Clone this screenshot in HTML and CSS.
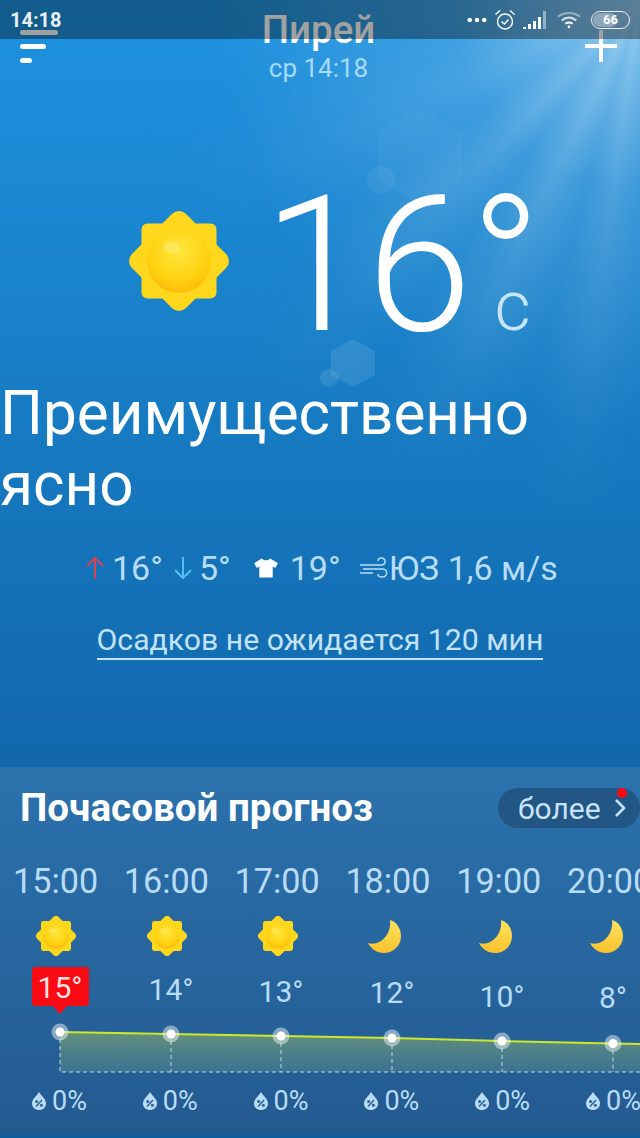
FILE: index.html
```html
<!DOCTYPE html>
<html lang="ru">
<head>
    <meta charset="UTF-8">
    <meta name="viewport" content="width=device-width, initial-scale=1.0">
    <title>Пирей</title>
    <link rel="stylesheet" href="styles.css">
</head>
<body>

    <svg class="defs" width="0" height="0">
        <defs>
            <radialGradient id="sunCore" cx="0.5" cy="0.35" r="0.7">
                <stop offset="0" stop-color="#ffe640"/>
                <stop offset="0.65" stop-color="#ffd20f"/>
                <stop offset="1" stop-color="#fbb50a"/>
            </radialGradient>
            <linearGradient id="moonFill" x1="0" y1="0" x2="0" y2="1">
                <stop offset="0" stop-color="#ffe45e"/>
                <stop offset="1" stop-color="#fbc12c"/>
            </linearGradient>
            <linearGradient id="chartFill" x1="0" y1="0" x2="0" y2="1">
                <stop offset="0" stop-color="#a5c05a" stop-opacity="0.5"/>
                <stop offset="1" stop-color="#6fa58e" stop-opacity="0.3"/>
            </linearGradient>
            <symbol id="sun" viewBox="0 0 100 100">
                <rect x="12.5" y="12.5" width="75" height="75" rx="6" fill="#ffd81e"/>
                <rect x="11.75" y="11.75" width="76.500" height="76.500" rx="10" fill="#ffd81e" transform="rotate(45 50 50)"/>
                <circle cx="50" cy="50" r="32" fill="url(#sunCore)"/>
                <ellipse cx="42" cy="36" rx="8" ry="6" fill="#fff3a0" opacity="0.35"/>
            </symbol>
            <symbol id="moon" viewBox="0 0 33 33">
                <path d="M22 0C29 2 33 9 33 16 33 26 25 33 16 33 9 33 3 29 0 23 12 27 24 14 22 0Z" fill="url(#moonFill)"/>
            </symbol>
            <symbol id="drop" viewBox="0 0 14 18">
                <path d="M7 0C9 3.500 14 7 14 11.500 14 15.400 10.900 18 7 18 3.100 18 0 15.400 0 11.500 0 7 5 3.500 7 0Z" fill="#b9dcf5"/>
                <path d="M4 14.500L10 8" stroke="#2a6399" stroke-width="1.500"/>
                <circle cx="4.600" cy="9.600" r="1.500" fill="#2a6399"/>
                <circle cx="9.400" cy="13.200" r="1.500" fill="#2a6399"/>
            </symbol>
        </defs>
    </svg>

    <div class="status-bar">
        <span class="clock">14:18</span>
        <div class="status-icons">
            <svg width="20" height="6" viewBox="0 0 22 6"><circle cx="3" cy="3" r="2.500" fill="#fff"/><circle cx="11" cy="3" r="2.500" fill="#fff"/><circle cx="19" cy="3" r="2.500" fill="#fff"/></svg>
            <svg width="22" height="22" viewBox="0 0 22 22" fill="none" stroke="#fff" stroke-width="1.400"><circle cx="11" cy="12.500" r="7.500"/><path d="M7.500 12.500l2.800 2.500 4.200-4.500M1.500 5.500L6 1.500M20.500 5.500L16 1.500"/></svg>
            <svg width="24" height="18" viewBox="0 0 24 18"><path d="M0 16h3v2H0zM5 13h3v5H5zM10 10h3v8h-3zM15 6h3v12h-3z" fill="#fff"/><path d="M20 0h3v18h-3z" fill="#fff" opacity="0.45"/></svg>
            <svg class="wifi" width="24" height="20" viewBox="0 0 26 20" fill="none" stroke="#fff" stroke-width="2"><path d="M1 6.500C8 1 18 1 25 6.500" opacity="0.45"/><path d="M5 10.500C10 6.500 16 6.500 21 10.500" opacity="0.8"/><path d="M9 14C11.500 12.300 14.500 12.300 17 14"/><circle cx="13" cy="17.500" r="1.500" fill="#fff" stroke="none"/></svg>
            <div class="battery"><span class="battery-fill"></span><span class="battery-num">66</span></div>
        </div>
    </div>

    <div class="hero">
        <div class="rays"></div>
        <span class="hex hex-big"></span>
        <span class="bokeh bokeh-top"></span>
        <span class="hex hex-low"></span>
        <span class="bokeh bokeh-low"></span>

        <div class="top-bar">
            <div class="menu-btn"><i></i><i></i><i></i></div>
            <div class="place">
                <h1>Пирей</h1>
                <p>ср 14:18</p>
            </div>
            <div class="add-btn"></div>
        </div>

        <div class="now">
            <svg class="now-icon" width="100" height="100"><use href="#sun"/></svg>
            <div class="now-temp">16°</div>
            <span class="unit">c</span>
        </div>

        <div class="summary">Преимущественно ясно</div>

        <div class="details">
            <svg width="20" height="24" viewBox="0 0 20 24" fill="none" stroke="#d8434f" stroke-width="2"><path d="M10 23V2M2 10l8-8 8 8"/></svg>
            <span class="val-hi">16°</span>
            <svg width="20" height="24" viewBox="0 0 20 24" fill="none" stroke="#4fc0f5" stroke-width="2"><path d="M10 1v21M2 14l8 8 8-8"/></svg>
            <span class="val-lo">5°</span>
            <svg class="shirt" width="24" height="20" viewBox="0 0 25 20"><path d="M8 0C10 2.500 15 2.500 17 0L25 5 22 10 19.500 8.500V20H5.500V8.500L3 10 0 5Z" fill="#fff"/></svg>
            <span class="val-feel">19°</span>
            <svg class="wind" width="28" height="24" viewBox="0 0 28 24" fill="none" stroke="#b9dcf5" stroke-width="1.500"><path d="M0 9h21c6 0 5-7 0-7-2 0-3 1-3 3M3 13h20c5 0 5 8-1 8-3 0-4-1-4-3M0 17h13"/></svg>
            <span>ЮЗ 1,6 м/s</span>
        </div>

        <div class="rain-note"><a>Осадков не ожидается 120 мин</a></div>
    </div>

    <div class="card">
        <div class="card-head">
            <h2>Почасовой прогноз</h2>
            <div class="more">более
                <svg width="12" height="20" viewBox="0 0 12 20" fill="none" stroke="#c8e3f7" stroke-width="2.500"><path d="M2 2l8 8-8 8"/></svg>
                <span class="more-dot"></span>
            </div>
        </div>

        <div class="hours">
            <div class="hour">15:00</div>
            <div class="hour">16:00</div>
            <div class="hour">17:00</div>
            <div class="hour">18:00</div>
            <div class="hour">19:00</div>
            <div class="hour">20:00</div>
        </div>

        <div class="icons">
            <svg width="40" height="40"><use href="#sun"/></svg>
            <svg width="40" height="40"><use href="#sun"/></svg>
            <svg width="40" height="40"><use href="#sun"/></svg>
            <svg width="33" height="33"><use href="#moon"/></svg>
            <svg width="33" height="33"><use href="#moon"/></svg>
            <svg width="33" height="33"><use href="#moon"/></svg>
        </div>

        <svg class="chart" width="640" height="115" viewBox="0 0 640 115">
            <path d="M60 67L171 69 281 71 392 73 502 76 613 78.500 640 79V107H60Z" fill="url(#chartFill)"/>
            <path class="dash" d="M60 67V107H640M171 69V107M281 71V107M392 73V107M502 76V107M613 78.500V107"/>
            <path d="M60 67L171 69 281 71 392 73 502 76 613 78.500 640 79" fill="none" stroke="#cbe82e" stroke-width="2"/>

            <path d="M35 2H86Q89 2 89 5V38Q89 41 86 41H67L60 49 53 41H35Q32 41 32 38V5Q32 2 35 2Z" fill="#f80b12"/>
            <text class="temp temp-now" x="60" y="33">15°</text>
            <text class="temp" x="171" y="35">14°</text>
            <text class="temp" x="281" y="37">13°</text>
            <text class="temp" x="392" y="38">12°</text>
            <text class="temp" x="502" y="42">10°</text>
            <text class="temp" x="613" y="43">8°</text>

            <g fill="#fff">
                <circle class="halo" cx="60" cy="67" r="8.500"/><circle cx="60" cy="67" r="4.500"/>
                <circle class="halo" cx="171" cy="69" r="8.500"/><circle cx="171" cy="69" r="4.500"/>
                <circle class="halo" cx="281" cy="71" r="8.500"/><circle cx="281" cy="71" r="4.500"/>
                <circle class="halo" cx="392" cy="73" r="8.500"/><circle cx="392" cy="73" r="4.500"/>
                <circle class="halo" cx="502" cy="76" r="8.500"/><circle cx="502" cy="76" r="4.500"/>
                <circle class="halo" cx="613" cy="78.500" r="8.500"/><circle cx="613" cy="78.500" r="4.500"/>
            </g>
        </svg>

        <div class="rain">
            <div class="rain-item"><svg width="14" height="18"><use href="#drop"/></svg>0%</div>
            <div class="rain-item"><svg width="14" height="18"><use href="#drop"/></svg>0%</div>
            <div class="rain-item"><svg width="14" height="18"><use href="#drop"/></svg>0%</div>
            <div class="rain-item"><svg width="14" height="18"><use href="#drop"/></svg>0%</div>
            <div class="rain-item"><svg width="14" height="18"><use href="#drop"/></svg>0%</div>
            <div class="rain-item"><svg width="14" height="18"><use href="#drop"/></svg>0%</div>
        </div>
    </div>

</body>
</html>
```

FILE: styles.css
```css
* {
    box-sizing: border-box;
}

html, body {
    margin: 0;
    height: 1138px;
    overflow: hidden;
}

body {
    position: relative;
    width: 640px;
    font-family: Roboto, "Noto Sans", sans-serif;
    background: linear-gradient(#1e93e0, #1167aa 767px, #0f5d9c);
    color: #fff;
}

.defs {
    position: absolute;
}

/* Status bar lies over the page */
.status-bar {
    position: absolute;
    z-index: 5;
    top: 0;
    left: 0;
    width: 640px;
    height: 39px;
    padding: 9px 10px 0 10px;
    display: flex;
    justify-content: space-between;
    align-items: flex-start;
    background-color: rgba(0, 0, 0, 0.37);
}

.clock {
    font-size: 20px;
    font-weight: 700;
    line-height: 22px;
    color: #e8eef2;
}

.status-icons {
    display: flex;
    align-items: center;
    gap: 7px;
    height: 22px;
}

.wifi {
    margin: 0 3px;
}

.battery {
    position: relative;
    width: 39px;
    height: 18px;
    border: 1.5px solid #eee;
    border-radius: 9px;
    overflow: hidden;
    text-align: center;
}

.battery-fill {
    position: absolute;
    left: 1px;
    top: 1px;
    bottom: 1px;
    width: 66%;
    border-radius: 7px;
    background-color: rgba(255, 255, 255, 0.35);
}

.battery-num {
    position: relative;
    display: block;
    font-size: 13px;
    font-weight: 700;
    line-height: 15px;
}

/* Hero */
.hero {
    position: relative;
    height: 767px;
    overflow: hidden;
}

.rays {
    position: absolute;
    inset: 0;
    background: radial-gradient(circle at 640px 0, rgba(255, 255, 255, 0.5), rgba(255, 255, 255, 0.14) 190px, rgba(255, 255, 255, 0) 430px);
}

/* Streaks fade out before the middle of the hero */
.rays::after {
    content: "";
    position: absolute;
    inset: 0;
    background: conic-gradient(from 180deg at 640px 0,
        rgba(255, 255, 255, 0) 0deg,
        rgba(255, 255, 255, 0.1) 8deg,
        rgba(255, 255, 255, 0) 16deg,
        rgba(255, 255, 255, 0.13) 26deg,
        rgba(255, 255, 255, 0) 36deg,
        rgba(255, 255, 255, 0.11) 44deg,
        rgba(255, 255, 255, 0) 55deg,
        rgba(255, 255, 255, 0.06) 66deg,
        rgba(255, 255, 255, 0) 80deg);
    -webkit-mask-image: radial-gradient(circle at 640px 0, #000 180px, transparent 540px);
    mask-image: radial-gradient(circle at 640px 0, #000 180px, transparent 540px);
}

.hex {
    position: absolute;
    clip-path: polygon(50% 0, 100% 25%, 100% 75%, 50% 100%, 0 75%, 0 25%);
    background-color: rgba(255, 255, 255, 0.1);
}

.hex-big {
    left: 378px;
    top: 108px;
    width: 84px;
    height: 96px;
    background-color: rgba(255, 255, 255, 0.035);
}

.hex-low {
    left: 331px;
    top: 339px;
    width: 44px;
    height: 48px;
}

.bokeh {
    position: absolute;
    border-radius: 50%;
    background-color: rgba(255, 255, 255, 0.1);
}

.bokeh-top {
    left: 367px;
    top: 166px;
    width: 28px;
    height: 28px;
    background-color: rgba(255, 255, 255, 0.06);
}

.bokeh-low {
    left: 320px;
    top: 369px;
    width: 18px;
    height: 18px;
}

.top-bar {
    position: relative;
    display: grid;
    grid-template-columns: 1fr auto 1fr;
    padding: 6px 23px 0 20px;
}

.menu-btn {
    display: flex;
    flex-direction: column;
    gap: 9px;
    padding-top: 24px;
}

.menu-btn i {
    display: block;
    height: 5px;
    border-radius: 3px;
    background-color: #fff;
}

.menu-btn i:nth-child(1) { width: 38px; }
.menu-btn i:nth-child(2) { width: 26px; }
.menu-btn i:nth-child(3) { width: 12px; }

.place {
    text-align: center;
}

.place h1 {
    margin: 0;
    font-size: 38.5px;
    font-weight: 500;
    line-height: 48px;
}

.place p {
    margin: 0;
    font-size: 26px;
    line-height: 28px;
    color: #a8daf9;
}

.add-btn {
    position: relative;
    justify-self: end;
    width: 32px;
    height: 32px;
    margin-top: 24px;
    background:
        linear-gradient(#fff, #fff) center / 100% 4px no-repeat,
        linear-gradient(#fff, #fff) center / 4px 100% no-repeat;
}

.now {
    position: relative;
    display: flex;
    align-items: flex-start;
    height: 190px;
    margin-top: 88px;
    padding-left: 129px;
}

.now-icon {
    margin-top: 41px;
}

.now-temp {
    margin-left: 34px;
    font-size: 190px;
    font-weight: 300;
    line-height: 190px;
    letter-spacing: -2px;
}

.unit {
    margin: 101px 0 0 -45px;
    font-size: 70px;
    font-weight: 300;
    line-height: 70px;
    color: #c5e5fb;
}

.summary {
    position: relative;
    margin-top: 18px;
    font-size: 60.2px;
    line-height: 71px;
}

.details {
    position: relative;
    display: flex;
    align-items: center;
    margin-top: 28px;
    padding-left: 85px;
    font-size: 34px;
    line-height: 40px;
    color: #b9dcf5;
}

.val-hi { margin: 0 10px 0 7px; }
.val-lo { margin: 0 23px 0 6px; }
.shirt { margin-right: 12px; }
.val-feel { margin-right: 19px; }
.wind { margin-right: 1px; }

.rain-note {
    position: relative;
    margin-top: 34px;
    text-align: center;
    font-size: 30.2px;
    line-height: 35px;
    color: #c2e2f8;
}

.rain-note a {
    display: inline-block;
    padding-bottom: 1px;
    border-bottom: 2px solid #c2e2f8;
}

/* Hourly card */
.card {
    height: 368px;
    background: linear-gradient(#2b72ad, #235a90);
    overflow: hidden;
}

.card-head {
    display: flex;
    justify-content: space-between;
    align-items: center;
    padding: 19px 0 0 20px;
}

.card-head h2 {
    margin: 0;
    font-size: 38.6px;
    font-weight: 700;
    line-height: 44px;
}

.more {
    position: relative;
    display: flex;
    align-items: center;
    gap: 13px;
    width: 142px;
    height: 40px;
    padding-left: 20px;
    border-radius: 20px;
    background-color: #225685;
    font-size: 30px;
    color: #c8e3f7;
}

.more-dot {
    position: absolute;
    right: 13px;
    top: 0;
    width: 10px;
    height: 10px;
    border-radius: 50%;
    background-color: #fb0a14;
}

.hours, .icons, .rain {
    display: grid;
    grid-template-columns: repeat(6, 110.8px);
    width: 640px;
}

.hours {
    margin-top: 31px;
}

.hour {
    padding-left: 13px;
    font-size: 34.2px;
    line-height: 40px;
    color: #b9dcf5;
    white-space: nowrap;
}

.icons {
    height: 40px;
    margin-top: 15px;
    justify-items: start;
    align-items: center;
    padding-left: 36px;
}

.chart {
    display: block;
    margin-top: 9px;
}

.dash {
    fill: none;
    stroke: #c3d9e8;
    stroke-width: 1;
    stroke-dasharray: 4 3;
}

.halo {
    opacity: 0.45;
}

.temp {
    font-size: 30px;
    fill: #b9dcf5;
    text-anchor: middle;
}

.temp-now {
    fill: #fde0e0;
}

.rain {
    margin-top: 5px;
}

.rain-item {
    display: flex;
    align-items: center;
    gap: 6px;
    padding-left: 32px;
    font-size: 27px;
    line-height: 32px;
    color: #b9dcf5;
}
```
